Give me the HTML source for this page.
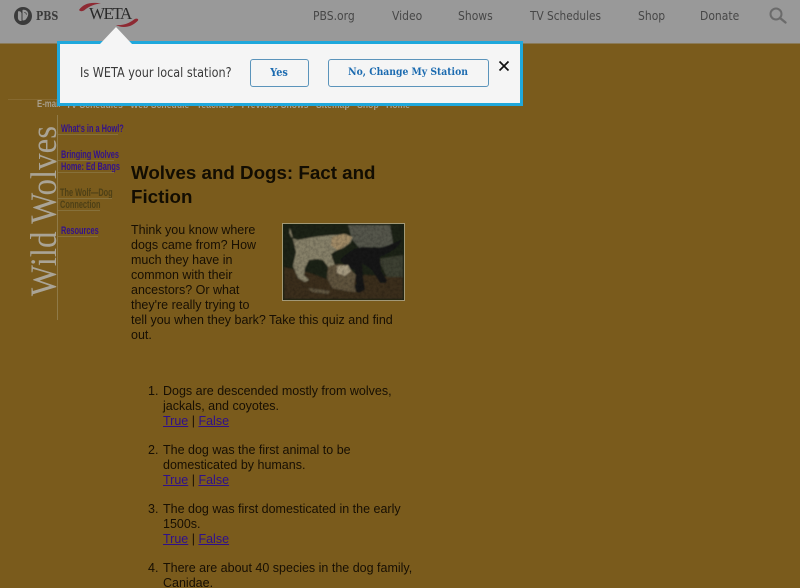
<!DOCTYPE html>
<html><head><meta charset="utf-8"><style>
html,body{margin:0;padding:0;background:#7a5b1c;}
#p{position:relative;width:800px;height:588px;overflow:hidden;background:#7a5b1c;font-family:"Liberation Sans",Arial,sans-serif;}
.t{position:absolute;white-space:nowrap;font-size:12.500px;line-height:15px;color:#170f03;}
.t a{color:#2f108a;text-decoration:underline;}
.nav{position:absolute;top:8px;font:12px/16px "DejaVu Sans",sans-serif;color:#474747;white-space:nowrap;transform-origin:0 50%;transform:scaleX(.9);}
.side{position:absolute;font:bold 11px/12px "Liberation Sans",sans-serif;color:#33128a;white-space:nowrap;transform:scaleX(.67);transform-origin:0 0;}
.ln{position:absolute;height:1px;background:#86703a;}
.btn{position:absolute;top:59px;height:28px;box-sizing:border-box;border:1.500px solid #5b94bb;border-radius:3px;background:#f5f5f5;color:#1c6bb0;font:bold 11px/25px "DejaVu Serif","Liberation Serif",serif;text-align:center;white-space:nowrap;}
.btn span{display:inline-block;transform:scaleX(.88);}
</style></head><body><div id="p">

<div style="position:absolute;left:0;top:0;width:800px;height:44px;background:#999;border-bottom:1px solid #8a7a58;box-sizing:border-box;"></div>

<svg style="position:absolute;left:13px;top:6px" width="20" height="20" viewBox="0 0 20 20">
<circle cx="10" cy="10" r="9" fill="#3b3b3b"/>
<path d="M5 5.500c2-.8 3.800.5 3.500 3v6.500c-2 .3-3.500-1-3.600-3.500z" fill="#999"/>
<path d="M9.500 4c2.500-.8 5.500.8 5.700 3.800.1 2-1.200 4.200-2.700 6-.8.600-2.200.800-3 .600z" fill="#999"/>
<path d="M11.200 6.500c1.500 0 2.300 1 2.200 2.200" stroke="#3b3b3b" stroke-width=".8" fill="none"/>
</svg>
<div style="position:absolute;left:36px;top:8px;font:bold 12px/16px 'DejaVu Serif',serif;color:#3b3b3b;transform:scaleX(.8);transform-origin:0 0">PBS</div>

<svg style="position:absolute;left:76px;top:0" width="66" height="30" viewBox="0 0 66 30">
<path d="M3 10C7 4 14 1.500 25 3.500 19 4 14 5.500 8 10.500 6 11.500 4 11.500 3 10z" fill="#8e2a33"/>
<path d="M40 25c7 .5 13-1.500 18-5.500 2-1.500 5-1 4 1C56 27 47 29 40 25z" fill="#8e2a33"/>
</svg>
<div style="position:absolute;left:89px;top:4px;font:17px/20px 'Liberation Serif',serif;color:#2a2a2a;letter-spacing:-1.500px;">WETA</div>

<div class="nav" style="left:313px;">PBS.org</div>
<div class="nav" style="left:392px;">Video</div>
<div class="nav" style="left:458px;">Shows</div>
<div class="nav" style="left:530px;transform:scaleX(.88)">TV Schedules</div>
<div class="nav" style="left:638px;">Shop</div>
<div class="nav" style="left:700px;">Donate</div>
<svg style="position:absolute;left:768px;top:6px" width="20" height="19" viewBox="0 0 20 19">
<circle cx="8" cy="8" r="5.500" fill="none" stroke="#6b6b6b" stroke-width="2"/>
<path d="M12 12l5.500 4.500" stroke="#6b6b6b" stroke-width="2.400" stroke-linecap="round"/>
</svg>

<!-- old page -->
<div class="ln" style="left:8px;top:99px;width:50px;background:#86692f"></div>
<div class="ln" style="left:57px;top:115px;width:1px;height:205px;background:#8f7a48"></div>
<div style="position:absolute;left:37px;top:99px;font:bold 10px/11px 'Liberation Sans',sans-serif;color:#a89f8c;white-space:nowrap;transform:scaleX(.78);transform-origin:0 0;">E-mail</div>
<div style="position:absolute;left:66px;top:100px;font:bold 9px/11px 'Liberation Sans',sans-serif;color:#a89f8c;white-space:nowrap;letter-spacing:.1px;transform:scaleX(.945);transform-origin:0 0;">TV Schedules &nbsp; Web Schedule &nbsp; Teachers &nbsp; Previous Shows &nbsp; Sitemap &nbsp; Shop &nbsp; Home</div>

<div style="position:absolute;left:45px;top:211px;width:0;height:0;">
<div style="position:absolute;left:-150px;top:-22px;width:300px;text-align:center;font:37px/44px 'Liberation Serif',serif;color:#aaa496;white-space:nowrap;transform:rotate(-90deg) scaleX(.89);">Wild Wolves</div>
</div>

<div class="side" style="left:61px;top:123px">What's in a Howl?</div>
<div class="ln" style="left:58px;top:134px;width:60px"></div>
<div class="side" style="left:61px;top:149px">Bringing Wolves</div>
<div class="ln" style="left:58px;top:160px;width:56px"></div>
<div class="side" style="left:61px;top:161px">Home: Ed Bangs</div>
<div class="ln" style="left:58px;top:172px;width:56px"></div>
<div class="side" style="left:60px;top:187px;color:#4e4016">The Wolf—Dog</div>
<div class="ln" style="left:58px;top:198px;width:54px"></div>
<div class="side" style="left:60px;top:199px;color:#4e4016">Connection</div>
<div class="ln" style="left:58px;top:210px;width:42px"></div>
<div class="side" style="left:61px;top:225px">Resources</div>
<div class="ln" style="left:58px;top:236px;width:40px"></div>

<div style="position:absolute;left:131px;top:161px;font:bold 18.750px/24px 'Liberation Sans',sans-serif;color:#120d02;white-space:nowrap;">Wolves and Dogs: Fact and<br>Fiction</div>

<div class="t" style="left:131px;top:223px">Think you know where</div>
<div class="t" style="left:131px;top:238px">dogs came from? How</div>
<div class="t" style="left:131px;top:253px">much they have in</div>
<div class="t" style="left:131px;top:268px">common with their</div>
<div class="t" style="left:131px;top:283px">ancestors? Or what</div>
<div class="t" style="left:131px;top:298px">they're really trying to</div>
<div class="t" style="left:131px;top:313px">tell you when they bark? Take this quiz and find</div>
<div class="t" style="left:131px;top:328px">out.</div>

<svg style="position:absolute;left:282px;top:223px" width="123" height="78" viewBox="0 0 123 78">
<defs>
<filter id="b"><feGaussianBlur stdDeviation=".8"/></filter>
<filter id="n" x="0" y="0" width="100%" height="100%"><feTurbulence type="fractalNoise" baseFrequency=".35" numOctaves="2" seed="4"/><feColorMatrix values="0 0 0 0 0 0 0 0 0 0 0 0 0 0 0 1.800 0 0 0 -.65"/></filter>
</defs>
<rect x=".5" y=".5" width="122" height="77" fill="#1a2012" stroke="#a59a78"/>
<g filter="url(#b)">
<rect x="2" y="2" width="119" height="74" fill="#1c2214"/>
<path d="M66 2h42l4 24-20-2-14 2-8-10z" fill="#55564c"/>
<path d="M2 44L28 50 60 62 82 52l39 2v22H2z" fill="#3a2f1e"/>
<path d="M96 36l25-4v22l-16 0z" fill="#3c4130"/>
<path d="M8 5c-2 6 1 11 8 12 10-2 26-5 39-5l8-1 8 3-3 6-7 5-6 2-6 4 3 9 5 14 5 2-3 2-5-1-7-12-6-8-6-1-8 1-4 8-1 7 5 5-4 2-7-4-5-12 3-14-3-13z" fill="#878169"/>
<path d="M50 14l12-3 8 3-3 6-7 5-5 2-6-5z" fill="#a08a66"/>
<path d="M58 37c8-8 15-13 24-13 9 0 14 2 22-1 6-2 11-5 15-6l-2 5c-6 6-12 9-19 12l1 14 6 9-1 3-6 0-8-13-10-7 1 14 2 13-6 3-7-3 4-6-1-14-8-3z" fill="#121214"/>
<path d="M46 44c8-4 17-4 22 2l6 6-2 9 2 8-10-1-14-3-5-10z" fill="#5e523e"/>
<path d="M55 43l11-1 3 6-6 5-8-3z" fill="#a89c82"/>
<path d="M26 65l22 3-2 3-16-2z" fill="#5e5440"/>
</g>
<rect x="2" y="2" width="119" height="74" filter="url(#n)" opacity=".22"/>
</svg>

<div class="t" style="left:148px;top:384px">1.</div>
<div class="t" style="left:163px;top:384px">Dogs are descended mostly from wolves,</div>
<div class="t" style="left:163px;top:399px">jackals, and coyotes.</div>
<div class="t" style="left:163px;top:414px"><a>True</a> | <a>False</a></div>

<div class="t" style="left:148px;top:443px">2.</div>
<div class="t" style="left:163px;top:443px">The dog was the first animal to be</div>
<div class="t" style="left:163px;top:458px">domesticated by humans.</div>
<div class="t" style="left:163px;top:473px"><a>True</a> | <a>False</a></div>

<div class="t" style="left:148px;top:502px">3.</div>
<div class="t" style="left:163px;top:502px">The dog was first domesticated in the early</div>
<div class="t" style="left:163px;top:517px">1500s.</div>
<div class="t" style="left:163px;top:532px"><a>True</a> | <a>False</a></div>

<div class="t" style="left:148px;top:561px">4.</div>
<div class="t" style="left:163px;top:561px">There are about 40 species in the dog family,</div>
<div class="t" style="left:163px;top:576px">Canidae.</div>

<!-- popup -->
<div style="position:absolute;left:57px;top:41px;width:466px;height:65px;box-sizing:border-box;border:3px solid #1fa8dc;background:#f5f5f5;"></div>
<div style="position:absolute;left:100px;top:27px;width:0;height:0;border-left:16px solid transparent;border-right:16px solid transparent;border-bottom:17px solid #f5f5f5;"></div>
<div style="position:absolute;left:80px;top:65px;font:13px/17px 'DejaVu Sans',sans-serif;color:#3a3a3a;white-space:nowrap;transform:scaleX(.865);transform-origin:0 0;">Is WETA your local station?</div>
<div class="btn" style="left:250px;width:59px;"><span>Yes</span></div>
<div class="btn" style="left:328px;width:161px;font-size:10.500px;"><span>No, Change My Station</span></div>
<svg style="position:absolute;left:498px;top:60px" width="12" height="12" viewBox="0 0 12 12"><path d="M1.500 1.500l9 9M10.500 1.500l-9 9" stroke="#111" stroke-width="1.700"/></svg>

</div></body></html>
